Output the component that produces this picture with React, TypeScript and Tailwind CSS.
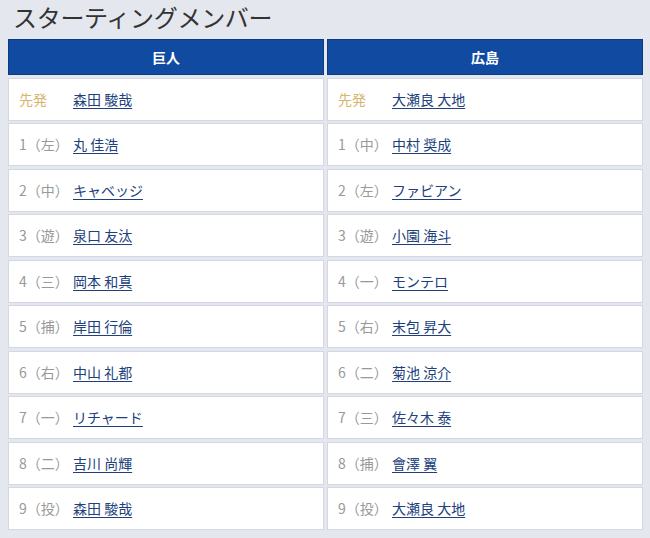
const giants = [
  { pos: '先発', name: '森田 駿哉' },
  { pos: '1（左）', name: '丸 佳浩' },
  { pos: '2（中）', name: 'キャベッジ' },
  { pos: '3（遊）', name: '泉口 友汰' },
  { pos: '4（三）', name: '岡本 和真' },
  { pos: '5（捕）', name: '岸田 行倫' },
  { pos: '6（右）', name: '中山 礼都' },
  { pos: '7（一）', name: 'リチャード' },
  { pos: '8（二）', name: '吉川 尚輝' },
  { pos: '9（投）', name: '森田 駿哉' },
]

const carp = [
  { pos: '先発', name: '大瀬良 大地' },
  { pos: '1（中）', name: '中村 奨成' },
  { pos: '2（左）', name: 'ファビアン' },
  { pos: '3（遊）', name: '小園 海斗' },
  { pos: '4（一）', name: 'モンテロ' },
  { pos: '5（右）', name: '末包 昇大' },
  { pos: '6（二）', name: '菊池 涼介' },
  { pos: '7（三）', name: '佐々木 泰' },
  { pos: '8（捕）', name: '會澤 翼' },
  { pos: '9（投）', name: '大瀬良 大地' },
]

const TeamColumn = ({ team, players }: { team: string; players: { pos: string; name: string }[] }) => {
  return (
    <div className="flex flex-col gap-[2.5px]">
      <div className="h-[36px] flex items-center justify-center bg-[#114ba1] border border-[#0c3a80] text-white font-bold text-[14px]">
        {team}
      </div>
      {players.map((p, i) => (
        <div
          key={i}
          className="h-[43px] flex items-center bg-white border border-[#d3d8e2] pl-[10px] text-[14px]"
        >
          <span className={'w-[54px] shrink-0 ' + (p.pos === '先発' ? 'text-[#d6b56e]' : 'text-[#999999]')}>
            {p.pos}
          </span>
          <a href="#" className="text-[#213f7c] underline underline-offset-[3px]">
            {p.name}
          </a>
        </div>
      ))}
    </div>
  )
}

const App = () => {
  return (
    <div
      className="w-[650px] h-[538px] bg-[#e4e7ee] overflow-hidden"
      style={{ fontFamily: '"Noto Sans CJK JP", "Noto Sans", sans-serif' }}
    >
      <h1 className="pl-[13px] pt-[1px] h-[39px] text-[24px] leading-[32px] text-[#333333] tracking-[-0.3px]">
        スターティングメンバー
      </h1>
      <div className="grid grid-cols-2 gap-[3px] pl-[8px] pr-[7px]">
        <TeamColumn team="巨人" players={giants} />
        <TeamColumn team="広島" players={carp} />
      </div>
    </div>
  )
}

export default App
